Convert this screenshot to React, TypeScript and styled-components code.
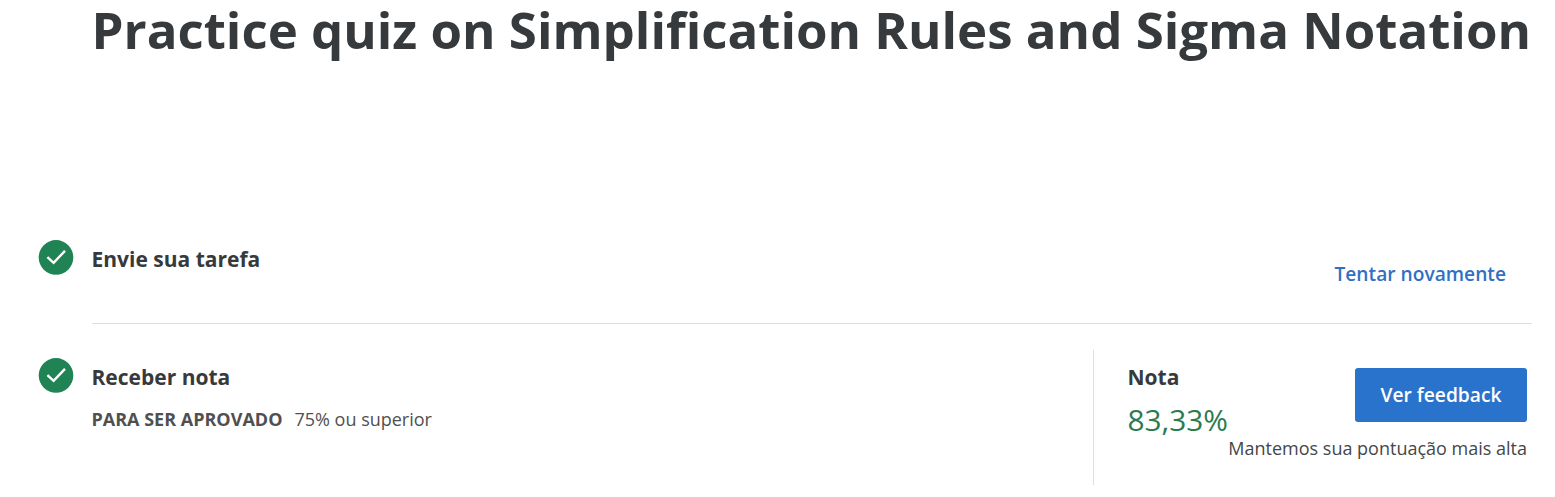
import React from "react";
import styled, { createGlobalStyle } from "styled-components";

const GlobalStyle = createGlobalStyle`
  * { box-sizing: border-box; }
  body {
    margin: 0;
    background: #fff;
    color: #373a3c;
    font-family: "Open Sans", "Noto Sans", sans-serif;
  }
`;

const Page = styled.main`
  width: 1555px;
  height: 497px;
  padding: 0 23px 0 38px;
`;

const Title = styled.h1`
  margin: 0 -20px 165px 53.5px;
  font-size: 51px;
  line-height: 59px;
  font-weight: 700;
  white-space: nowrap;
`;

const Step = styled.section`
  display: grid;
  grid-template-columns: 54px 1fr;
`;

const StatusIcon = styled.svg<{ $top: number }>`
  width: 36px;
  height: 36px;
  margin-top: ${(p) => p.$top}px;
`;

const SubmitBody = styled.div`
  display: flex;
  justify-content: space-between;
  height: 100px;
  padding: 20px 26px 0 0;
  border-bottom: 1px solid #dfdfe0;
`;

const Heading = styled.h2`
  margin: 0 0 0 -0.5px;
  font-size: 21px;
  line-height: 30px;
  font-weight: 700;
  white-space: nowrap;
`;

const RetryButton = styled.button`
  height: 30px;
  margin-top: 15px;
  padding: 0;
  border: 0;
  background: none;
  color: #2f70c4;
  font: 600 19.2px/30px "Open Sans", sans-serif;
  white-space: nowrap;
`;

const GradeBody = styled.div`
  display: flex;
  justify-content: space-between;
  padding-top: 26px;
`;

const Receive = styled.div`
  padding-top: 12px;
`;

const Requirement = styled.p`
  display: flex;
  gap: 12px;
  margin: 14px 0 0 -0.5px;
  font-size: 18px;
  line-height: 26px;
  font-weight: 400;
  color: #505050;
  white-space: nowrap;
`;

const Label = styled.strong`
  font-weight: 700;
`;

const GradePanel = styled.div`
  display: flex;
  width: 439px;
  height: 135px;
  padding: 12px 5px 0 34px;
  border-left: 1px solid #dfdfe0;
`;

const Score = styled.div`
  margin: 10px 0 0 -0.5px;
  font-size: 29.8px;
  line-height: 36px;
  font-weight: 400;
  color: #2a7b4f;
`;

const Grade = styled.div`
  width: 100px;
`;

const Actions = styled.div`
  display: flex;
  flex: 1;
  flex-direction: column;
  align-items: flex-end;
  padding-top: 6px;
`;

const FeedbackButton = styled.button`
  width: 172px;
  height: 54px;
  padding: 0;
  border: 0;
  border-radius: 3px;
  background: #2a73cc;
  color: #fff;
  font: 600 19.2px/30px "Open Sans", sans-serif;
  white-space: nowrap;
`;

const Note = styled.p`
  margin: 13px 0 0;
  font-size: 18px;
  line-height: 26px;
  font-weight: 400;
  color: #44474a;
  white-space: nowrap;
`;

function Check({ top }: { top: number }) {
  return (
    <StatusIcon viewBox="0 0 36 36" $top={top} aria-hidden="true">
      <circle cx="18" cy="17.4" r="17.3" fill="#1f8354" />
      <path d="M9.4 17.2 15.6 22.8 27 10.8" fill="none" stroke="#fff" strokeWidth="2.4" />
    </StatusIcon>
  );
}

export default function App() {
  return (
    <Page>
      <GlobalStyle />
      <Title>Practice quiz on Simplification Rules and Sigma Notation</Title>
      <Step>
        <Check top={16} />
        <SubmitBody>
          <Heading>Envie sua tarefa</Heading>
          <RetryButton>Tentar novamente</RetryButton>
        </SubmitBody>
      </Step>
      <Step>
        <Check top={34} />
        <GradeBody>
          <Receive>
            <Heading>Receber nota</Heading>
            <Requirement>
              <Label>PARA SER APROVADO</Label>
              <span>75% ou superior</span>
            </Requirement>
          </Receive>
          <GradePanel>
            <Grade>
              <Heading>Nota</Heading>
              <Score>83,33%</Score>
            </Grade>
            <Actions>
              <FeedbackButton>Ver feedback</FeedbackButton>
              <Note>Mantemos sua pontuação mais alta</Note>
            </Actions>
          </GradePanel>
        </GradeBody>
      </Step>
    </Page>
  );
}
